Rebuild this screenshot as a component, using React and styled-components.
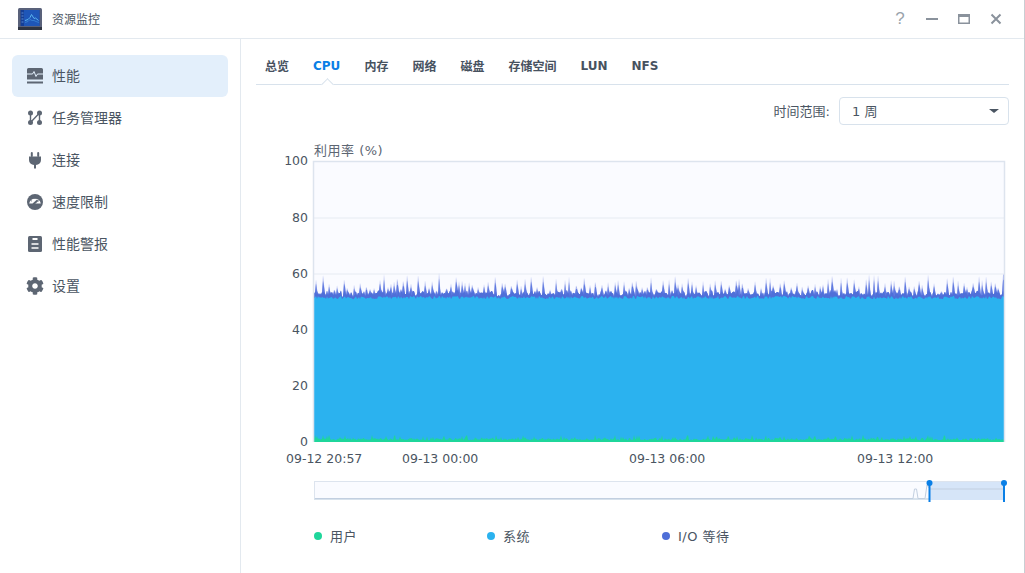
import React, { useMemo } from 'react';
import styled, { createGlobalStyle } from 'styled-components';
import { FaCog } from 'react-icons/fa';

const SANS = '"DejaVu Sans", "Noto Sans CJK SC", sans-serif';
const CJK = '"Noto Sans CJK SC", "DejaVu Sans", sans-serif';

const GlobalStyle = createGlobalStyle`
    html, body {
        margin: 0;
        height: 100%;
        background: #fff;
        overflow: hidden;
    }
    #root {
        height: 100%;
    }
`;

const Win = styled.div`
    display: flex;
    flex-direction: column;
    height: 573px;
    width: 1025px;
    box-sizing: border-box;
    border-right: 1px solid #c9ced3;
    font-family: ${CJK};
    color: #4a5562;
`;

const TitleBar = styled.div`
    display: flex;
    align-items: center;
    height: 39px;
    box-sizing: border-box;
    padding: 0 21px 0 18px;
    border-bottom: 1px solid #e3e9ef;
    flex-shrink: 0;
`;

const AppTitle = styled.div`
    margin-left: 10px;
    padding-bottom: 2px;
    font-size: 12px;
    flex: 1;
`;

const WinButtons = styled.div`
    display: flex;
    align-items: center;
    gap: 18px;
`;

const Help = styled.span`
    font: 17px/16px 'Liberation Sans', sans-serif;
    color: #9aa3ac;
    width: 14px;
    text-align: center;
`;

const Body = styled.div`
    display: flex;
    flex: 1;
    min-height: 0;
`;

const Sidebar = styled.nav`
    width: 241px;
    box-sizing: border-box;
    border-right: 1px solid #e3e9ef;
    padding: 16px 12px 0;
    flex-shrink: 0;
`;

const NavItem = styled.div`
    display: flex;
    align-items: center;
    height: 42px;
    box-sizing: border-box;
    padding: 0 0 0 14px;
    gap: 8px;
    border-radius: 6px;
    font-size: 14px;
    background: ${({ $active }) => ($active ? '#e3effb' : 'transparent')};
    svg {
        width: 18px;
        height: 18px;
        color: #5d6673;
        flex-shrink: 0;
    }
`;

const NavLabel = styled.span`
    padding-bottom: 2px;
`;

const Main = styled.main`
    flex: 1;
    display: flex;
    flex-direction: column;
    padding: 0 15px;
    min-width: 0;
`;

const Tabs = styled.div`
    display: flex;
    gap: 24px;
    height: 46px;
    box-sizing: border-box;
    padding: 8px 0 0 9px;
    align-items: center;
    border-bottom: 1px solid #d8e2ec;
`;

const Tab = styled.div`
    position: relative;
    font-family: ${SANS};
    font-size: 12px;
    font-weight: 700;
    color: ${({ $active }) => ($active ? '#0a7fe6' : '#47525f')};
    ${({ $active }) =>
        $active &&
        `
        &::after {
            content: '';
            position: absolute;
            left: 50%;
            bottom: -16px;
            width: 8px;
            height: 8px;
            margin-left: -4px;
            background: #fff;
            border-left: 1px solid #d8e2ec;
            border-top: 1px solid #d8e2ec;
            transform: rotate(45deg);
        }
    `}
`;

const RangeRow = styled.div`
    display: flex;
    justify-content: flex-end;
    align-items: center;
    gap: 9px;
    margin-top: 12px;
    font-family: ${SANS};
    font-size: 13px;
`;

const RangeLabel = styled.span`
    padding-bottom: 2px;
`;

const Select = styled.div`
    display: flex;
    align-items: center;
    justify-content: space-between;
    box-sizing: border-box;
    width: 170px;
    height: 28px;
    padding: 0 9px 0 12px;
    border: 1px solid #d8e2ec;
    border-radius: 4px;
    font-size: 13px;
`;

const Caret = styled.span`
    width: 0;
    height: 0;
    margin-bottom: 1px;
    border-left: 5px solid transparent;
    border-right: 5px solid transparent;
    border-top: 4px solid #4a5562;
`;

const ChartSvg = styled.svg`
    display: block;
    width: 753px;
    height: 366px;
    margin-top: 16px;
`;

const Legend = styled.div`
    display: flex;
    margin: 19px 0 0 58px;
    font-size: 13px;
    letter-spacing: 0.5px;
`;

const LegendItem = styled.div`
    display: flex;
    align-items: center;
    gap: 8px;
    width: ${({ $w }) => $w}px;
    font-family: ${SANS};
    &::before {
        content: '';
        width: 8px;
        height: 8px;
        border-radius: 50%;
        background: ${({ $color }) => $color};
    }
`;

const NAV = ['性能', '任务管理器', '连接', '速度限制', '性能警报', '设置'];
const TABS = ['总览', 'CPU', '内存', '网络', '磁盘', '存储空间', 'LUN', 'NFS'];

const PerfIcon = () => (
    <svg viewBox="0 0 18 18" fill="none">
        <path d="M2.5 1h13A1.5 1.5 0 0 1 17 2.500V12.500H1V2.500A1.500 1.500 0 0 1 2.500 1z" fill="currentColor" />
        <rect x="1" y="14.500" width="16" height="2" fill="currentColor" />
        <path d="M1 7h5.500l1.500-2.500 2 5 1.500-2.500h5.500" stroke="#e3effb" strokeWidth="1" />
    </svg>
);

const TaskIcon = () => (
    <svg viewBox="0 0 18 18" fill="currentColor">
        <path d="M4.500 4v9.500L13.500 4v9.500" stroke="currentColor" strokeWidth="1.400" fill="none" />
        <circle cx="4.500" cy="4" r="2.500" />
        <circle cx="13.500" cy="4" r="2.500" />
        <circle cx="4.500" cy="13.500" r="2.500" />
        <circle cx="13.500" cy="13.500" r="2.500" />
    </svg>
);

const PlugIcon = () => (
    <svg viewBox="0 0 18 18" fill="currentColor">
        <rect x="4.800" y="1" width="2" height="5" rx="1" />
        <rect x="11.200" y="1" width="2" height="5" rx="1" />
        <path d="M3 5.500h12V9a5 5 0 0 1-5 5v3.500H8V14a5 5 0 0 1-5-5z" />
    </svg>
);

const GaugeIcon = () => (
    <svg viewBox="0 0 18 18" fill="none">
        <circle cx="9" cy="9" r="8" fill="currentColor" />
        <path d="M3.200 10.500a5.900 5.900 0 0 1 11.600 0z" fill="#fff" />
        <path d="M7.200 11.200l4.500-4" stroke="currentColor" strokeWidth="2" />
        <path d="M5 7.500l1 .8M9 4.500v1.200M13 7.500l-1 .8" stroke="currentColor" strokeWidth="0.800" />
    </svg>
);

const ReportIcon = () => (
    <svg viewBox="0 0 18 18" fill="none">
        <rect x="2" y="1" width="14" height="16" rx="1.500" fill="currentColor" />
        <rect x="6.500" y="3" width="5" height="2" fill="#fff" />
        <path d="M5.500 9h7M5.500 13h7" stroke="#fff" strokeWidth="1.400" />
    </svg>
);

const ICONS = [PerfIcon, TaskIcon, PlugIcon, GaugeIcon, ReportIcon, FaCog];

const Logo = () => (
    <svg width="24" height="22" viewBox="0 0 24 22">
        <rect width="24" height="22" rx="1.500" fill="#59617a" />
        <rect y="19" width="24" height="3" fill="#2f3542" />
        <rect x="2.500" y="2" width="19" height="16" fill="#153f96" />
        <rect x="6" y="2" width="15.500" height="16" fill="#1e56b8" />
        <path d="M7 12.500l3-1 2-2 1.500-3 2.500 4 1.500-.5 3 2.500" fill="none" stroke="#5ab4ee" strokeWidth="1" />
        <path d="M7 14.500l3-1 2-2 2 1 2 0 2 1 3 1" fill="none" stroke="#3a86d6" strokeWidth="0.800" />
        <path d="M3.500 5h2M3.500 8h2M3.500 11h2M3.500 14h2" stroke="#6fa0e0" strokeWidth="0.800" />
    </svg>
);

// small seeded generator so the chart looks the same on every load
const rng = (seed) => () => {
    seed = (seed * 16807) % 2147483647;
    return seed / 2147483647;
};

const X0 = 58;
const X1 = 748;
const TOP = 21;
const BOTTOM = 301;
const yOf = (v) => BOTTOM - (v / 100) * (BOTTOM - TOP);

const toPath = (s) =>
    `M${X0} ${BOTTOM}` + s.map(([x, v]) => `L${x} ${yOf(v).toFixed(1)}`).join('') + `L${X1} ${BOTTOM}Z`;

const buildSeries = () => {
    const r = rng(4242);
    const green = [];
    const blue = [];
    const band = [];
    const dark = [];
    const halo = [];
    let next = 2;
    let height = 0;
    let left = 0;
    for (let x = X0; x <= X1; x++) {
        if (x - X0 >= next) {
            height = 1.5 + r() * 4.5;
            left = 2;
            next = x - X0 + 3 + Math.floor(r() * 5);
        }
        const g = 0.6 + r() * (r() > 0.75 ? 2 : 0.8);
        const b = 51 + r() * 1.2;
        const p = b + 0.6 + r() * 1.6;
        const spike = left === 2 ? height : left === 1 ? height * 0.45 : 0;
        left = Math.max(0, left - 1);
        green.push([x, g]);
        blue.push([x, b]);
        band.push([x, p]);
        dark.push([x, p + spike * 0.7]);
        halo.push([x, p + spike * 1.05]);
    }
    halo[halo.length - 1][1] = 60;
    dark[dark.length - 1][1] = 58;
    return {
        green: toPath(green),
        blue: toPath(blue),
        band: toPath(band),
        dark: toPath(dark),
        halo: toPath(halo),
    };
};

const Chart = () => {
    const paths = useMemo(buildSeries, []);
    const axis = { fontFamily: SANS, fontSize: 12.5, fill: '#4a5562' };

    return (
        <ChartSvg viewBox="0 0 753 366">
            <text x="58" y="14" fontFamily={SANS} fontSize="13" letterSpacing="0.5" fill="#5d6673">利用率 (%)</text>
            <rect x={X0} y={TOP} width={X1 - X0} height={BOTTOM - TOP} fill="#fafbff" />
            {[20, 40, 60, 80].map((v) => (
                <line key={v} x1={X0} x2={X1} y1={yOf(v)} y2={yOf(v)} stroke="#e6ebf2" />
            ))}
            <path d={paths.halo} fill="#aab6ef" />
            <path d={paths.dark} fill="#5f7ae0" />
            <path d={paths.band} fill="#4f6fd8" />
            <path d={paths.blue} fill="#2bb2ef" />
            <path d={paths.green} fill="#1fd69b" />
            <path d={`M${X0 - 0.5} ${BOTTOM}V${TOP - 0.5}H${X1 + 0.5}V${BOTTOM}`} fill="none" stroke="#dde4ee" strokeWidth="1.500" />
            {[0, 20, 40, 60, 80, 100].map((v) => (
                <text key={v} {...axis} x="52" y={v === 100 ? yOf(v) + 3 : yOf(v) + 4} textAnchor="end">{v}</text>
            ))}
            <text {...axis} x="30" y="322">09-12 20:57</text>
            <text {...axis} x="146" y="322">09-13 00:00</text>
            <text {...axis} x="373" y="322">09-13 06:00</text>
            <text {...axis} x="601" y="322">09-13 12:00</text>

            {/* navigator */}
            <rect x={X0 + 0.5} y="340.500" width={X1 - X0 - 1} height="18" fill="#fafbff" stroke="#dde4ee" />
            <rect x={X0} y="357" width={X1 - X0} height="2" fill="#d8e2ec" />
            <rect x="673" y="341" width="75" height="18" fill="#d6e5f8" />
            <path d="M59 357.500H657L658.500 348H660.500L662 357.500H669L671 344L674 348H748" fill="none" stroke="#c2cfe0" strokeWidth="1" />
            <path d="M673.500 342V361M748 342V361" stroke="#0a7fe6" strokeWidth="2" />
            <circle cx="673.500" cy="342" r="3" fill="#0a7fe6" />
            <circle cx="748" cy="342" r="3" fill="#0a7fe6" />
        </ChartSvg>
    );
};

const App = () => (
    <>
        <GlobalStyle />
        <Win>
            <TitleBar>
                <Logo />
                <AppTitle>资源监控</AppTitle>
                <WinButtons>
                    <Help>?</Help>
                    <svg width="14" height="14" viewBox="0 0 14 14">
                        <rect x="1" y="6" width="12" height="2" fill="#8a929c" />
                    </svg>
                    <svg width="14" height="14" viewBox="0 0 14 14">
                        <path d="M1 2h12v10H1z" fill="#8a929c" />
                        <rect x="2.500" y="5" width="9" height="5.500" fill="#fff" />
                    </svg>
                    <svg width="14" height="14" viewBox="0 0 14 14">
                        <path d="M2.500 2.500l9 9M11.500 2.500l-9 9" stroke="#8a929c" strokeWidth="2" />
                    </svg>
                </WinButtons>
            </TitleBar>
            <Body>
                <Sidebar>
                    {NAV.map((label, i) => {
                        const Icon = ICONS[i];
                        return (
                            <NavItem key={label} $active={i === 0}>
                                <Icon />
                                <NavLabel>{label}</NavLabel>
                            </NavItem>
                        );
                    })}
                </Sidebar>
                <Main>
                    <Tabs>
                        {TABS.map((t) => (
                            <Tab key={t} $active={t === 'CPU'}>{t}</Tab>
                        ))}
                    </Tabs>
                    <RangeRow>
                        <RangeLabel>时间范围:</RangeLabel>
                        <Select>
                            <RangeLabel>1 周</RangeLabel>
                            <Caret />
                        </Select>
                    </RangeRow>
                    <Chart />
                    <Legend>
                        <LegendItem $color="#1fd69b" $w={173}>用户</LegendItem>
                        <LegendItem $color="#2bb2ef" $w={175}>系统</LegendItem>
                        <LegendItem $color="#4f6fd8" $w={120}>I/O 等待</LegendItem>
                    </Legend>
                </Main>
            </Body>
        </Win>
    </>
);

export default App;
